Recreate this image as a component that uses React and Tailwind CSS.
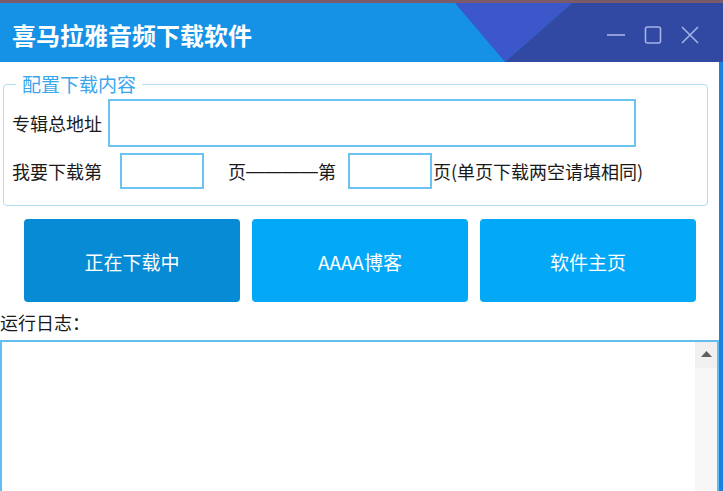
import React from "react";

const font = { fontFamily: '"Noto Sans CJK SC", "Microsoft YaHei", sans-serif' };
const dashFont = { fontFamily: '"Liberation Sans", Arial, sans-serif' };

function TitleBar() {
  return (
    <div className="relative h-[59px] bg-[#1592e6] flex items-center pt-[5px] overflow-hidden">
      <svg className="absolute inset-0" width="723" height="59" viewBox="0 0 723 59">
        <polygon points="455,0 572,0 505,59" fill="#3b57c9" />
        <polygon points="572,0 723,0 723,59 505,59" fill="#3249a4" />
      </svg>
      <div className="relative pl-[12px] text-[24px] leading-[30px] font-bold text-white">
        喜马拉雅音频下载软件
      </div>
      <div className="relative ml-auto mr-[24px] flex items-center gap-[19px]">
        <svg width="18" height="18" viewBox="0 0 18 18">
          <line x1="0" y1="9" x2="18" y2="9" stroke="#a7b2e6" strokeWidth="1.6" />
        </svg>
        <svg width="18" height="18" viewBox="0 0 18 18">
          <rect x="1.5" y="1" width="15" height="16" rx="2" fill="none" stroke="#a7b2e6" strokeWidth="1.6" />
        </svg>
        <svg width="18" height="18" viewBox="0 0 18 18">
          <path d="M1 1 L17 17 M17 1 L1 17" stroke="#a7b2e6" strokeWidth="1.6" fill="none" />
        </svg>
      </div>
    </div>
  );
}

export default function App() {
  return (
    <div className="w-[723px] h-[491px] overflow-hidden bg-white flex flex-col" style={font}>
      <div className="h-[3px] bg-[#7b5a6a]" />
      <TitleBar />
      <div className="flex flex-1 min-h-0">
        <div className="w-[719px] flex flex-col">
          <fieldset className="mt-[11px] ml-[3px] w-[705px] border border-[#b3dcf3] rounded-[4px] pb-[16px]">
            <legend className="ml-[12px] px-[6px] text-[19px] leading-[22px] text-[#3aa6ee]">配置下载内容</legend>
            <div className="pt-[4px] pl-[8px] flex items-center">
              <span className="w-[90px] text-[18px] leading-[24px] text-[#1a1a1a] whitespace-nowrap">专辑总地址</span>
              <div className="ml-[6px] w-[528px] h-[48px] border-2 border-[#6cc3f1] bg-white" />
            </div>
            <div className="mt-[6px] pl-[8px] flex items-center text-[18px] leading-[24px] text-[#1a1a1a] whitespace-nowrap">
              <span className="w-[90px]">我要下载第</span>
              <div className="ml-[18px] w-[84px] h-[36px] border-2 border-[#6cc3f1] bg-white" />
              <span className="ml-[24px]">页</span>
              <span className="inline-block w-[72px] overflow-hidden pb-[1px]" style={dashFont}>————</span>
              <span>第</span>
              <div className="ml-[12px] w-[84px] h-[36px] border-2 border-[#6cc3f1] bg-white" />
              <span className="ml-[1px]">页(单页下载两空请填相同)</span>
            </div>
          </fieldset>
          <div className="mt-[13px] pl-[24px] flex gap-[12px]">
            <div className="w-[216px] h-[83px] rounded-[4px] bg-[#078bd4] flex items-center justify-center pt-[3px] text-white text-[19px]">正在下载中</div>
            <div className="w-[216px] h-[83px] rounded-[4px] bg-[#03a9f6] flex items-center justify-center pt-[3px] text-white text-[19px]">AAAA博客</div>
            <div className="w-[216px] h-[83px] rounded-[4px] bg-[#03a9f6] flex items-center justify-center pt-[3px] text-white text-[19px]">软件主页</div>
          </div>
          <div className="mt-[8px] text-[18px] leading-[24px] text-[#1a1a1a]">运行日志：</div>
          <div className="mt-[6px] h-[170px] shrink-0 border-2 border-[#62bdf0] flex">
            <div className="flex-1" />
            <div className="w-[22px] bg-[#f7f7f7] flex flex-col">
              <div className="h-[26px] bg-[#f0f0f0] flex items-start justify-center pt-[9px]">
                <svg width="11" height="6" viewBox="0 0 11 6">
                  <polygon points="5.5,0 11,6 0,6" fill="#606060" />
                </svg>
              </div>
            </div>
          </div>
        </div>
        <div className="w-[4px] bg-[#1c80e0]" />
      </div>
    </div>
  );
}
